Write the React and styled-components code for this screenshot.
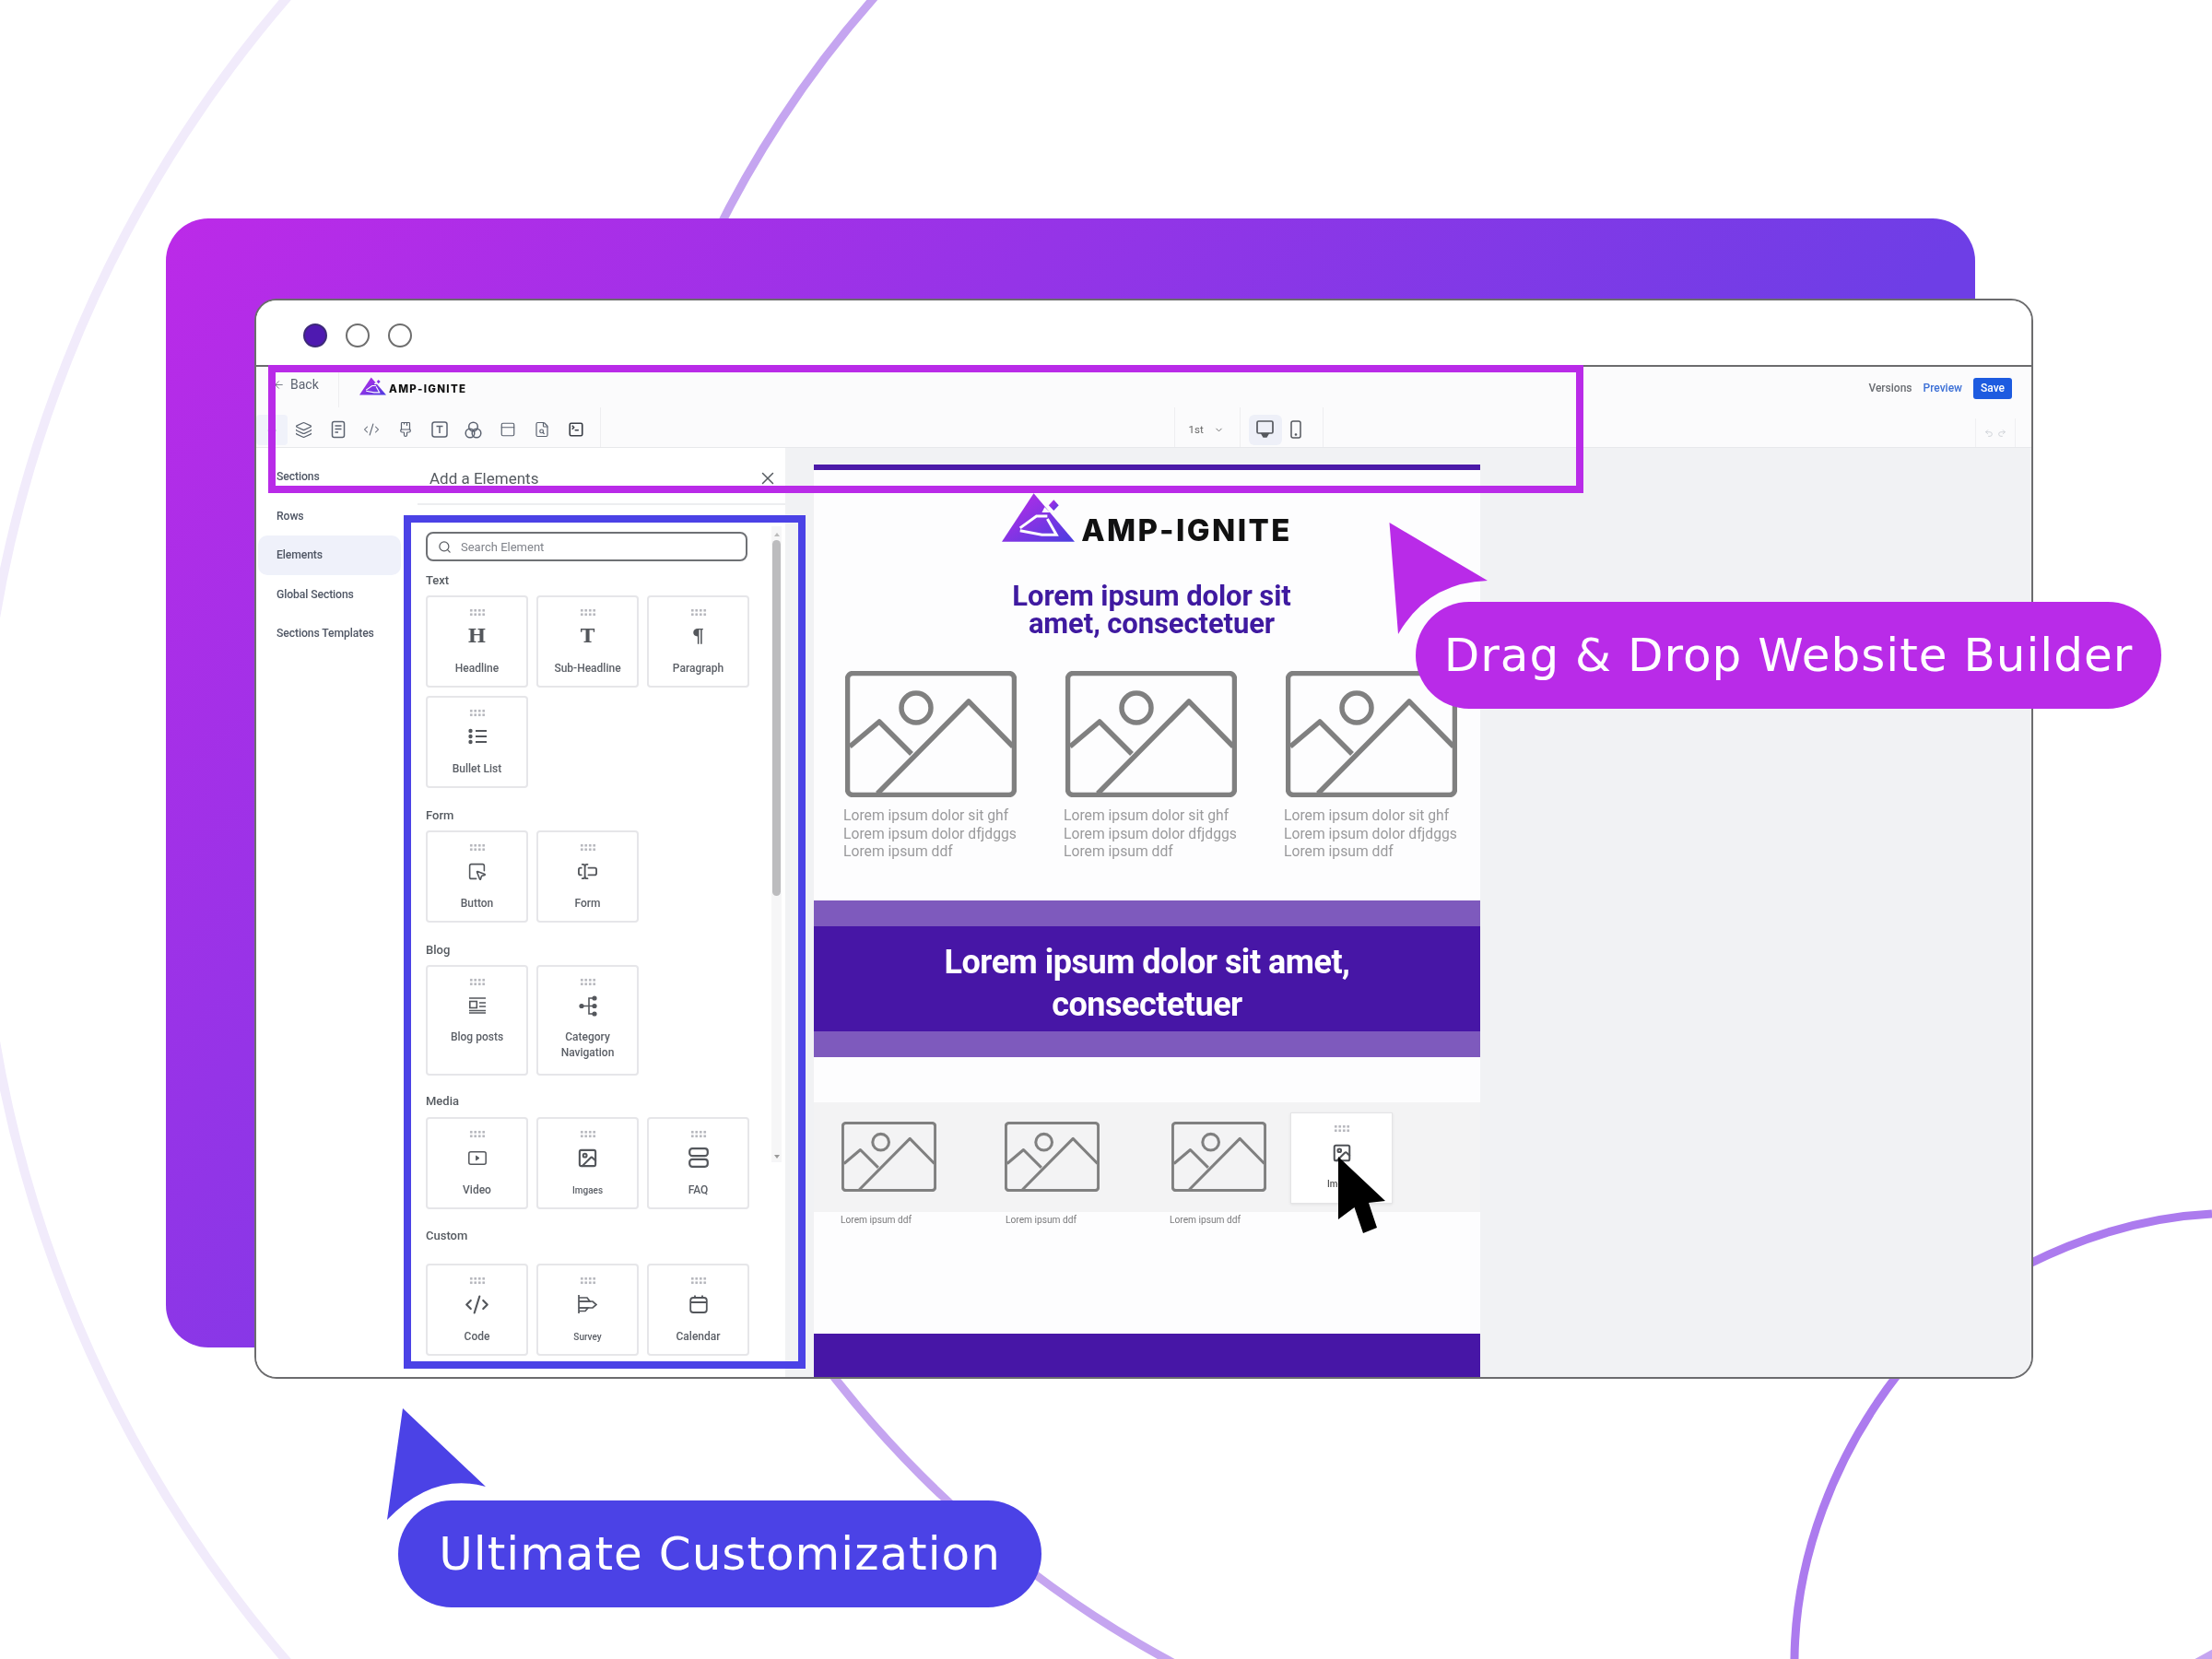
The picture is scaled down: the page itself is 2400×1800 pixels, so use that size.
import styled, { createGlobalStyle } from 'styled-components';
import {
  ArrowLeft, ArrowRight, Layers, CodeXml, PaintbrushVertical, PanelTop, FileSearch,
  SquareTerminal, Search, X, ChevronDown, SquareMousePointer, TextCursorInput, Image, Undo2, Redo2,
} from 'lucide-react';

const GlobalStyle = createGlobalStyle`
  html, body { margin: 0; padding: 0; background: #fff; }
  * { box-sizing: border-box; }
`;

const Stage = styled.div`
  position: relative;
  width: 2400px;
  height: 1800px;
  overflow: hidden;
  padding: 237px 0 0 180px;
  background: #fff;
  font-family: Roboto, "Liberation Sans", sans-serif;
`;

const Arcs = styled.svg`
  position: absolute;
  left: 0;
  top: 0;
`;

const Backdrop = styled.div`
  position: relative;
  width: 1963px;
  height: 1225px;
  padding: 87px 0 0 96px;
  border-radius: 46px;
  background: linear-gradient(135deg, #bc2ae8 0%, #6e3ee6 62%);
`;

const Window = styled.div`
  display: flex;
  flex-direction: column;
  width: 1930px;
  height: 1172px;
  background: #fff;
  border: 2px solid #6c6c6e;
  border-radius: 24px;
  overflow: hidden;
`;

const TitleBar = styled.div`
  display: flex;
  align-items: center;
  gap: 20px;
  height: 72px;
  flex: none;
  padding: 6px 0 0 51px;
  background: #fff;
  border-bottom: 2px solid #6c6c6e;
`;

const Dot = styled.span`
  width: 26px;
  height: 26px;
  border-radius: 50%;
  border: 2px solid ${(p) => (p.$active ? '#3d2a78' : '#6e6e6e')};
  background: ${(p) => (p.$active ? '#4e19b0' : '#fff')};
`;

const TopRow = styled.div`
  display: flex;
  align-items: center;
  height: 44px;
  flex: none;
  background: #fbfbfc;
  padding-right: 21px;
  filter: blur(0.4px);
`;

const BackArea = styled.div`
  display: flex;
  align-items: center;
  gap: 6px;
  align-self: stretch;
  width: 90px;
  padding: 0 0 6px 18px;
  border-right: 1px solid #eeeef0;
  color: #5b6270;
  font-size: 14px;
`;

const SmallLogo = styled.div`
  display: flex;
  align-items: flex-end;
  gap: 3px;
  margin-left: 22px;
  margin-bottom: 3px;
`;

const LogoWord = styled.span`
  font-family: Inter, "Liberation Sans", sans-serif;
  font-weight: 800;
  color: #111;
  font-size: ${(p) => p.$size}px;
  letter-spacing: ${(p) => p.$track}px;
  line-height: 1;
  margin-bottom: ${(p) => p.$drop || 0}px;
`;

const TopActions = styled.div`
  display: flex;
  align-items: center;
  gap: 12px;
  margin-left: auto;
  padding-top: 2px;
  font-size: 12px;
  font-weight: 500;
`;

const TopLink = styled.span`
  color: ${(p) => (p.$blue ? '#3b6fd6' : '#6a6d72')};
`;

const SaveButton = styled.span`
  display: flex;
  align-items: center;
  justify-content: center;
  width: 42px;
  height: 23px;
  border-radius: 3px;
  background: #1d5be0;
  color: #fff;
`;

const ToolRow = styled.div`
  display: flex;
  align-items: center;
  height: 44px;
  flex: none;
  background: #fbfbfc;
  border-bottom: 1px solid #e7e8eb;
  color: #5c6370;
  filter: blur(0.4px);
`;

const BackChip = styled.span`
  display: flex;
  align-items: center;
  justify-content: center;
  width: 34px;
  height: 33px;
  margin-top: 6px;
  border-radius: 4px;
  background: #f0f2fa;
  color: #c4c8d6;
`;

const ToolIcons = styled.div`
  display: flex;
  align-items: center;
  gap: 18.7px;
  align-self: stretch;
  padding: 5px 17px 0 8px;
  border-right: 1px solid #eeeef0;
`;

const ViewGroup = styled.div`
  display: flex;
  align-items: center;
  align-self: stretch;
  margin-left: 622px;
  border-left: 1px solid #eeeef0;
`;

const ZoomSelect = styled.div`
  display: flex;
  align-items: center;
  gap: 11px;
  align-self: stretch;
  width: 71px;
  padding: 5px 0 0 15px;
  border-right: 1px solid #eeeef0;
  font-size: 11.5px;
  color: #666;
`;

const DeviceGroup = styled.div`
  display: flex;
  align-items: center;
  align-self: stretch;
  width: 90px;
  padding: 5px 0 0 9px;
  border-right: 1px solid #eeeef0;
`;

const DeviceButton = styled.span`
  display: flex;
  align-items: center;
  justify-content: center;
  width: ${(p) => (p.$active ? 36 : 30)}px;
  height: 33px;
  border-radius: 6px;
  background: ${(p) => (p.$active ? '#eef0f8' : 'transparent')};
`;

const UndoBox = styled.div`
  display: flex;
  align-items: center;
  justify-content: center;
  gap: 4px;
  align-self: flex-end;
  width: 44px;
  height: 31px;
  margin: 0 17px 0 auto;
  border-left: 1px solid #f0f0f2;
  border-right: 1px solid #f0f0f2;
  color: #c9ccd2;
`;

const Body = styled.div`
  display: flex;
  flex: 1;
  min-height: 0;
  filter: blur(0.4px);
`;

const Nav = styled.nav`
  display: flex;
  flex-direction: column;
  flex: none;
  width: 170px;
  padding: 10px 13px 0 2px;
  background: #fff;
`;

const NavItem = styled.div`
  display: flex;
  align-items: center;
  height: 42.5px;
  padding-left: 20px;
  border-radius: 10px;
  background: ${(p) => (p.$active ? '#eff1fa' : 'transparent')};
  color: #4f5664;
  font-size: 12.2px;
  font-weight: 500;
  letter-spacing: -0.1px;
`;

const Panel = styled.aside`
  display: flex;
  flex-direction: column;
  flex: none;
  width: 404px;
  background: #fff;
`;

const PanelHead = styled.div`
  display: flex;
  align-items: center;
  justify-content: space-between;
  height: 62px;
  flex: none;
  margin-left: 5px;
  padding: 6px 8px 0 13px;
  border-bottom: 2px solid #edeef0;
  font-size: 17px;
  color: #555a60;
`;

const PanelBody = styled.div`
  display: flex;
  padding: 29px 0 0 14px;
`;

const PanelColumn = styled.div`
  display: flex;
  flex-direction: column;
  width: 351px;
`;

const SearchBox = styled.div`
  display: flex;
  align-items: center;
  gap: 10px;
  width: 349px;
  height: 32px;
  padding-left: 11px;
  border: 2px solid #6f7175;
  border-radius: 8px;
  font-size: 13px;
  color: #80838a;
`;

const GroupLabel = styled.div`
  margin-top: ${(p) => p.$top}px;
  margin-bottom: ${(p) => p.$bottom || 8}px;
  height: 16px;
  line-height: 16px;
  font-size: 13px;
  font-weight: 500;
  color: #555a60;
`;

const CardGrid = styled.div`
  display: grid;
  grid-template-columns: repeat(3, 111px);
  gap: 9px;
`;

const ElementCard = styled.div`
  display: flex;
  flex-direction: column;
  align-items: center;
  height: ${(p) => (p.$tall ? 120 : 100)}px;
  padding-top: 12px;
  background: #fff;
  border: 2px solid #e6e6e9;
  border-radius: 4px;
  color: #54575c;
`;

const Grip = styled.span`
  flex: none;
  width: 18px;
  height: 9px;
  background-image: radial-gradient(circle, #b4b5bb 1.2px, transparent 1.6px);
  background-size: 4.5px 4.5px;
`;

const CardIcon = styled.span`
  display: flex;
  align-items: center;
  justify-content: center;
  flex: none;
  height: 26px;
  margin-top: 8px;
`;

const GlyphIcon = styled.span`
  font-family: "DejaVu Serif", "Liberation Serif", serif;
  font-weight: 700;
  font-size: 21px;
  line-height: 26px;
  color: #54575c;
`;

const CardLabel = styled.span`
  margin-top: ${(p) => (p.$tall ? 13 : 14)}px;
  text-align: center;
  line-height: 17px;
  font-weight: 500;
  font-size: ${(p) => (p.$small ? 10 : 12)}px;
  color: #5b5f66;
`;

const Scrollbar = styled.div`
  display: flex;
  flex-direction: column;
  align-items: center;
  flex: none;
  align-self: flex-start;
  width: 11px;
  height: 690px;
  margin: -6px 0 0 24px;
  background: #f6f6f7;
`;

const ScrollArrow = styled.span`
  flex: none;
  width: 0;
  height: 0;
  margin: ${(p) => (p.$down ? 'auto 0 4px' : '7px 0 4px')};
  border-left: 3px solid transparent;
  border-right: 3px solid transparent;
  border-bottom: ${(p) => (p.$down ? 'none' : '4px solid #bbb')};
  border-top: ${(p) => (p.$down ? '4px solid #999' : 'none')};
`;

const ScrollThumb = styled.span`
  width: 9px;
  height: 386px;
  border-radius: 5px;
  background: #bcbcbe;
`;

const Canvas = styled.main`
  flex: 1;
  min-width: 0;
  padding: 18px 0 0 31px;
  background: #f1f2f4;
`;

const Page = styled.div`
  display: flex;
  flex-direction: column;
  width: 723px;
  height: 100%;
  background: #fdfdfe;
`;

const PageRule = styled.div`
  height: 6px;
  flex: none;
  background: #4b1aa8;
`;

const BigLogo = styled.div`
  display: flex;
  align-items: flex-end;
  justify-content: center;
  gap: 7px;
  margin-top: 25px;
  height: 53px;
`;

const PageTitle = styled.h2`
  margin: 44px 0 0 10px;
  text-align: center;
  font-size: 31px;
  line-height: 30px;
  font-weight: 700;
  letter-spacing: -0.1px;
  color: #3f1aa0;
`;

const GalleryRow = styled.div`
  display: grid;
  grid-template-columns: repeat(3, 186px);
  column-gap: 53px;
  margin-top: 36px;
  padding-left: 34px;
`;

const GalleryItem = styled.div`
  display: flex;
  flex-direction: column;
`;

const Caption = styled.p`
  margin: 10px 0 0 -2px;
  white-space: nowrap;
  font-size: 15.7px;
  line-height: 19.5px;
  color: #9a9a9c;
`;

const Banner = styled.div`
  display: flex;
  align-items: center;
  justify-content: center;
  flex: none;
  height: 170px;
  margin-top: 43px;
  padding-top: 10px;
  border-top: 28px solid #7e5abd;
  border-bottom: 28px solid #7e5abd;
  background: #4716a6;
  color: #fff;
  text-align: center;
  font-size: 36px;
  line-height: 46px;
  font-weight: 700;
  letter-spacing: -0.5px;
`;

const Strip = styled.div`
  position: relative;
  display: grid;
  grid-template-columns: 177px 181px 103px;
  align-items: center;
  height: 119px;
  flex: none;
  margin-top: 49px;
  padding-left: 30px;
  background: #f3f3f4;
`;

const DragCard = styled.div`
  position: absolute;
  left: 517px;
  top: 11px;
  display: flex;
  flex-direction: column;
  align-items: flex-start;
  width: 111px;
  height: 99px;
  padding-top: 12px;
  background: #fff;
  border: 1px solid #e4e4e6;
  box-shadow: 0 1px 3px rgba(0, 0, 0, 0.08);
  color: #4f5257;
`;

const DragGrip = styled(Grip)`
  margin-left: 46px;
`;

const DragIcon = styled.span`
  display: flex;
  margin: 11px 0 0 44px;
`;

const DragLabel = styled.span`
  margin: 17px 0 0 39px;
  font-size: 10px;
  font-weight: 500;
  color: #555;
`;

const StripCaptions = styled.div`
  display: grid;
  grid-template-columns: 179px 178px 120px;
  padding: 2px 0 0 29px;
  font-size: 10.2px;
  line-height: 14px;
  color: #7a7a7c;
`;

const PageFooter = styled.div`
  height: 47px;
  flex: none;
  margin-top: auto;
  background: #4716a6;
`;

const Highlight = styled.div`
  position: absolute;
  left: ${(p) => p.$left}px;
  top: ${(p) => p.$top}px;
  width: ${(p) => p.$width}px;
  height: ${(p) => p.$height}px;
  border: 8px solid ${(p) => p.$color};
`;

const Callout = styled.div`
  position: absolute;
  left: ${(p) => p.$left}px;
  top: ${(p) => p.$top}px;
  display: flex;
  align-items: center;
  justify-content: center;
  width: ${(p) => p.$width}px;
  height: 116px;
  border-radius: 58px;
  background: ${(p) => p.$color};
  color: #fff;
  font-family: "DejaVu Sans", Inter, sans-serif;
  font-size: 50px;
  letter-spacing: 1px;
`;

const OverlayArt = styled.svg`
  position: absolute;
  left: 0;
  top: 0;
  pointer-events: none;
`;

const Logo = ({ width, height }) => (
  <svg width={width} height={height} viewBox="0 0 80 53">
    <defs>
      <linearGradient id="logoFill" x1="0" y1="0" x2="1" y2="1">
        <stop offset="0" stopColor="#c02ae8" />
        <stop offset="1" stopColor="#4a3de0" />
      </linearGradient>
    </defs>
    <path d="M0 53 L35 0 L80 53 Z" fill="url(#logoFill)" />
    <path d="M47 15 L44 21 L53 21 Z" fill="#fdfdfe" />
    <path d="M57 7 L62.5 13 L57 19 L51.5 13 Z" fill="url(#logoFill)" />
    <path d="M20 38 L38 25 L50 25 M20 41 L44 45.5 L60 45.5 L50 28" fill="none" stroke="#fdfdfe" strokeWidth="3" />
  </svg>
);

const ImagePlaceholder = ({ width, height }) => (
  <svg width={width} height={height} viewBox="0 0 186 137" fill="none" stroke="#808080" strokeWidth="5.5" strokeLinejoin="round">
    <rect x="2.5" y="2.5" width="181" height="132" rx="6" />
    <circle cx="77" cy="40" r="16" />
    <path d="M5 82 L37 55 L72 90" />
    <path d="M35 133 L134 33 L182 82" />
  </svg>
);

const BulletsIcon = () => (
  <svg width="20" height="18" viewBox="0 0 20 18" fill="#54575c" stroke="#54575c">
    <circle cx="2.5" cy="3" r="2.2" stroke="none" />
    <circle cx="2.5" cy="9" r="2.2" stroke="none" />
    <circle cx="2.5" cy="15" r="2.2" stroke="none" />
    <path d="M8 3 H20 M8 9 H20 M8 15 H20" strokeWidth="2" />
  </svg>
);

const BlogIcon = () => (
  <svg width="18" height="18" viewBox="0 0 18 18" fill="none" stroke="#54575c" strokeWidth="1.6">
    <path d="M0 1 H18 M0 14.5 H18 M0 17 H18 M11 6 H18 M11 10 H18" />
    <rect x="0.8" y="4.5" width="7.5" height="7" />
  </svg>
);

const CategoryIcon = () => (
  <svg width="20" height="23" viewBox="0 0 20 23" fill="#54575c" stroke="#54575c">
    <circle cx="3" cy="11.5" r="2.6" stroke="none" />
    <circle cx="17" cy="3" r="2.6" stroke="none" />
    <circle cx="17" cy="11.5" r="2.6" stroke="none" />
    <circle cx="17" cy="20" r="2.6" stroke="none" />
    <path d="M3 11.5 H17 M17 3 H11 V20 H17" fill="none" strokeWidth="1.6" />
  </svg>
);

const VideoIcon = () => (
  <svg width="20" height="15" viewBox="0 0 20 15" fill="none" stroke="#54575c" strokeWidth="1.5">
    <rect x="0.8" y="0.8" width="18.4" height="13.4" rx="2" />
    <path d="M8.5 5 L12 7.5 L8.5 10 Z" fill="#54575c" strokeWidth="0.8" />
  </svg>
);

const FaqIcon = () => (
  <svg width="22" height="22" viewBox="0 0 22 22" fill="none" stroke="#54575c" strokeWidth="2.2">
    <rect x="1.2" y="1.2" width="19.6" height="8" rx="3" />
    <rect x="1.2" y="12.8" width="19.6" height="8" rx="3" />
  </svg>
);

const SurveyIcon = () => (
  <svg width="21" height="22" viewBox="0 0 21 22" fill="none" stroke="#54575c" strokeWidth="1.7">
    <path d="M1 1 V21" />
    <path d="M1 4 H10 L13 8 H1" />
    <path d="M1 8 H16 L20 11.5 L16 15 H1" />
    <path d="M1 15 H11 L8 18.5 H1" />
  </svg>
);

const CalendarIcon = () => (
  <svg width="20" height="20" viewBox="0 0 20 20" fill="none" stroke="#54575c" strokeWidth="1.8">
    <rect x="1.2" y="3" width="17.6" height="16" rx="3" />
    <path d="M1.2 8 H18.8 M6 0.5 V4 M14 0.5 V4" />
  </svg>
);

const DesktopIcon = () => (
  <svg width="19" height="20" viewBox="0 0 19 20" fill="none" stroke="#55585e" strokeWidth="1.7">
    <rect x="1" y="1" width="17" height="13" rx="1.5" />
    <path d="M6 14.5 H13 L11 18 H8 Z" fill="#55585e" />
  </svg>
);

const TabletIcon = () => (
  <svg width="12" height="20" viewBox="0 0 12 20" fill="none" stroke="#55585e" strokeWidth="1.5">
    <rect x="1" y="1" width="10" height="18" rx="2" />
    <circle cx="6" cy="15.5" r="0.6" fill="#55585e" />
  </svg>
);

const DocIcon = () => (
  <svg width="18" height="20" viewBox="0 0 18 20" fill="none" stroke="#5c6370" strokeWidth="1.5">
    <rect x="2.5" y="1.5" width="13" height="17" rx="2" />
    <path d="M5.5 6 H12.5 M5.5 9.5 H12.5 M5.5 13 H9" />
  </svg>
);

const TypeBoxIcon = () => (
  <svg width="18" height="18" viewBox="0 0 18 18" fill="none" stroke="#5c6370" strokeWidth="1.5">
    <rect x="1" y="1" width="16" height="16" rx="2.5" />
    <path d="M5.5 5.5 H12.5 M9 5.5 V13" />
  </svg>
);

const BlendIcon = () => (
  <svg width="19" height="19" viewBox="0 0 19 19" fill="none" stroke="#5c6370" strokeWidth="1.5">
    <circle cx="9.5" cy="6" r="4.8" />
    <circle cx="6" cy="13" r="4.8" />
    <circle cx="13" cy="13" r="4.8" />
  </svg>
);

const toolIcons = [
  <Layers key="layers" size={19} strokeWidth={1.6} />,
  <DocIcon key="doc" />,
  <CodeXml key="code" size={18} strokeWidth={1.4} />,
  <PaintbrushVertical key="brush" size={18} strokeWidth={1.6} />,
  <TypeBoxIcon key="type" />,
  <BlendIcon key="blend" />,
  <PanelTop key="panel" size={18} strokeWidth={1.6} />,
  <FileSearch key="search" size={18} strokeWidth={1.6} />,
  <SquareTerminal key="terminal" size={18} strokeWidth={2.2} color="#3c4048" />,
];

const groups = [
  {
    label: 'Text',
    top: 13,
    items: [
      { label: 'Headline', glyph: 'H' },
      { label: 'Sub-Headline', glyph: 'T' },
      { label: 'Paragraph', glyph: '¶' },
      { label: 'Bullet List', icon: <BulletsIcon /> },
    ],
  },
  {
    label: 'Form',
    top: 22,
    items: [
      { label: 'Button', icon: <SquareMousePointer size={21} strokeWidth={1.8} /> },
      { label: 'Form', icon: <TextCursorInput size={23} strokeWidth={1.9} /> },
    ],
  },
  {
    label: 'Blog',
    top: 22,
    tall: true,
    items: [
      { label: 'Blog posts', icon: <BlogIcon /> },
      { label: <>Category<br />Navigation</>, icon: <CategoryIcon /> },
    ],
  },
  {
    label: 'Media',
    top: 20,
    bottom: 9,
    items: [
      { label: 'Video', icon: <VideoIcon /> },
      { label: 'Imgaes', small: true, icon: <Image size={23} strokeWidth={2.2} /> },
      { label: 'FAQ', icon: <FaqIcon /> },
    ],
  },
  {
    label: 'Custom',
    top: 21,
    bottom: 22,
    items: [
      { label: 'Code', icon: <CodeXml size={27} strokeWidth={1.9} /> },
      { label: 'Survey', small: true, icon: <SurveyIcon /> },
      { label: 'Calendar', icon: <CalendarIcon /> },
    ],
  },
];

const navItems = ['Sections', 'Rows', 'Elements', 'Global Sections', 'Sections Templates'];

const App = () => (
  <Stage>
    <GlobalStyle />
    <Arcs width="2400" height="1800" viewBox="0 0 2400 1800" fill="none">
      <circle cx="1358" cy="900" r="1382" stroke="#f1ebfb" strokeWidth="10" />
      <circle cx="1828" cy="772" r="1172" stroke="#c5a5f0" strokeWidth="9" />
      <path d="M2400 1317 Q2300 1322 2200 1372" stroke="#ac7bee" strokeWidth="9" />
      <path d="M2060 1490 C1990 1580 1948 1690 1947 1800" stroke="#ac7bee" strokeWidth="9" />
    </Arcs>

    <Backdrop>
      <Window>
        <TitleBar>
          <Dot $active />
          <Dot />
          <Dot />
        </TitleBar>

        <TopRow>
          <BackArea>
            <ArrowLeft size={13} strokeWidth={1.5} />
            Back
          </BackArea>
          <SmallLogo>
            <Logo width={29} height={20} />
            <LogoWord $size={11.5} $track={1.3}>AMP-IGNITE</LogoWord>
          </SmallLogo>
          <TopActions>
            <TopLink>Versions</TopLink>
            <TopLink $blue>Preview</TopLink>
            <SaveButton>Save</SaveButton>
          </TopActions>
        </TopRow>

        <ToolRow>
          <BackChip><ArrowRight size={14} /></BackChip>
          <ToolIcons>{toolIcons}</ToolIcons>
          <ViewGroup>
            <ZoomSelect>
              1st
              <ChevronDown size={11} />
            </ZoomSelect>
            <DeviceGroup>
              <DeviceButton $active><DesktopIcon /></DeviceButton>
              <DeviceButton><TabletIcon /></DeviceButton>
            </DeviceGroup>
          </ViewGroup>
          <UndoBox>
            <Undo2 size={10} />
            <Redo2 size={10} />
          </UndoBox>
        </ToolRow>

        <Body>
          <Nav>
            {navItems.map((item) => (
              <NavItem key={item} $active={item === 'Elements'}>{item}</NavItem>
            ))}
          </Nav>

          <Panel>
            <PanelHead>
              Add a Elements
              <X size={22} strokeWidth={1.6} />
            </PanelHead>
            <PanelBody>
              <PanelColumn>
                <SearchBox>
                  <Search size={15} strokeWidth={2} color="#5a5d62" />
                  Search Element
                </SearchBox>
                {groups.map((group) => (
                  <div key={group.label}>
                    <GroupLabel $top={group.top} $bottom={group.bottom}>{group.label}</GroupLabel>
                    <CardGrid>
                      {group.items.map((item, i) => (
                        <ElementCard key={i} $tall={group.tall}>
                          <Grip />
                          <CardIcon>{item.glyph ? <GlyphIcon>{item.glyph}</GlyphIcon> : item.icon}</CardIcon>
                          <CardLabel $small={item.small} $tall={group.tall}>{item.label}</CardLabel>
                        </ElementCard>
                      ))}
                    </CardGrid>
                  </div>
                ))}
              </PanelColumn>
              <Scrollbar>
                <ScrollArrow />
                <ScrollThumb />
                <ScrollArrow $down />
              </Scrollbar>
            </PanelBody>
          </Panel>

          <Canvas>
            <Page>
              <PageRule />
              <BigLogo>
                <Logo width={79} height={53} />
                <LogoWord $size={33} $track={2.4} $drop={-4}>AMP-IGNITE</LogoWord>
              </BigLogo>
              <PageTitle>Lorem ipsum dolor sit<br />amet, consectetuer</PageTitle>
              <GalleryRow>
                {[0, 1, 2].map((i) => (
                  <GalleryItem key={i}>
                    <ImagePlaceholder width={186} height={137} />
                    <Caption>Lorem ipsum dolor sit ghf<br />Lorem ipsum dolor dfjdggs<br />Lorem ipsum ddf</Caption>
                  </GalleryItem>
                ))}
              </GalleryRow>
              <Banner>Lorem ipsum dolor sit amet,<br />consectetuer</Banner>
              <Strip>
                {[0, 1, 2].map((i) => (
                  <ImagePlaceholder key={i} width={103} height={76} />
                ))}
                <DragCard>
                  <DragGrip />
                  <DragIcon><Image size={22} strokeWidth={2.2} /></DragIcon>
                  <DragLabel>Imgaes</DragLabel>
                </DragCard>
              </Strip>
              <StripCaptions>
                <span>Lorem ipsum ddf</span>
                <span>Lorem ipsum ddf</span>
                <span>Lorem ipsum ddf</span>
              </StripCaptions>
              <PageFooter />
            </Page>
          </Canvas>
        </Body>
      </Window>
    </Backdrop>

    <Highlight $left={291} $top={396} $width={1427} $height={139} $color="#b92be8" />
    <Highlight $left={438} $top={559} $width={436} $height={926} $color="#4b42e6" />

    <OverlayArt width="2400" height="1800" viewBox="0 0 2400 1800">
      <path d="M1507.5 567 L1614 630 Q1549 632 1517 688 Z" fill="#b92be8" />
      <path d="M437 1528 L527 1613 Q470 1597 420 1649 Z" fill="#4b42e6" />
      <path d="M1452 1255 L1452 1323 L1469.5 1310 L1479 1338 L1494 1332 L1485 1305 L1503 1303 Z" fill="#000" />
    </OverlayArt>

    <Callout $left={1536} $top={653} $width={809} $color="#b92be8">Drag &amp; Drop Website Builder</Callout>
    <Callout $left={432} $top={1628} $width={698} $color="#4b42e6">Ultimate Customization</Callout>
  </Stage>
);

export default App;
